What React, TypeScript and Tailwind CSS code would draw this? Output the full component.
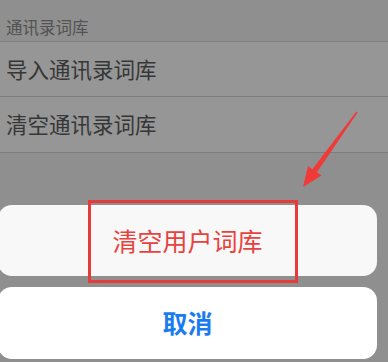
const font = { fontFamily: '"Noto Sans CJK SC", "Noto Sans", sans-serif' };

const rows = ["导入通讯录词库", "清空通讯录词库"];

export default function App() {
  return (
    <div className="relative w-[388px] h-[362px] overflow-hidden bg-[#8f8f8f]" style={font}>
      {/* section header */}
      <div className="h-[42px] border-b border-[#7e7e7e] pl-[6px] pt-[17px] text-[16.5px] leading-[20px] text-[#525252]">
        通讯录词库
      </div>

      {/* list rows */}
      <div className="bg-[#969696]">
        {rows.map((r, i) => (
          <div
            key={r}
            className={`flex items-center pl-[6px] text-[21.5px] text-[#363636] border-b border-[#7e7e7e] ${
              i === 0 ? "h-[55px]" : "h-[56px]"
            }`}
          >
            {r}
          </div>
        ))}
      </div>

      {/* action sheet */}
      <div className="mt-[52px] -ml-[2px] w-[379px] flex flex-col gap-[11px]">
        <div className="h-[71px] rounded-[14px] bg-[#f8f8f8] flex items-center justify-center text-[25px] text-[#e8423f]">
          清空用户词库
        </div>
        <div className="h-[72px] rounded-[14px] bg-white flex items-center justify-center text-[25px] font-bold text-[#1b7cf0]">
          取消
        </div>
      </div>

      {/* annotation box */}
      <div className="absolute left-[88px] top-[200px] w-[210px] h-[83px] border-[3px] border-[#e53b3b]" />

      {/* annotation arrow */}
      <svg className="absolute inset-0" width="388" height="362" viewBox="0 0 388 362">
        <polygon
          points="357.6,112.4 317,172.3 321.4,175.6 303,187 308,165.9 312.3,169.2 356.4,111.6"
          fill="#f03a3a"
        />
      </svg>
    </div>
  );
}
